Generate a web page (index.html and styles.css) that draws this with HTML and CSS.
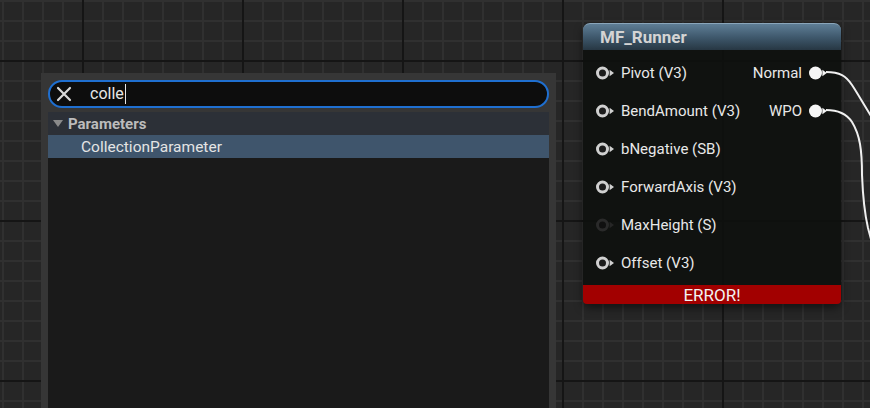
FILE: index.html
```html
<!DOCTYPE html>
<html>
<head>
<meta charset="utf-8">
<link rel="stylesheet" href="styles.css">
</head>
<body>
<div class="canvas">
  <div class="menu">
    <div class="search">
      <svg class="clear" width="16" height="16" viewBox="0 0 16 16"><path d="M2 2 L14 14 M14 2 L2 14" stroke="#d8d8d8" stroke-width="2.2" stroke-linecap="round"/></svg>
      <span class="query">colle</span><span class="caret"></span>
    </div>
    <div class="list">
      <div class="category"><span class="tri"></span>Parameters</div>
      <div class="item">CollectionParameter</div>
    </div>
  </div>

  <div class="node">
    <div class="node-head">MF_Runner</div>
    <div class="node-body">
      <div class="row">
        <span class="pin"><svg width="19" height="14" viewBox="0 0 19 14"><circle cx="6.5" cy="7" r="5" fill="#1c1c1c" stroke="#d0d0d0" stroke-width="3"/><path d="M13.6 3.8 L18 7 L13.6 10.2 Z" fill="#d0d0d0"/></svg></span>
        <span class="label">Pivot (V3)</span>
        <span class="out">Normal<span class="pin"><svg width="19" height="14" viewBox="0 0 19 14"><circle cx="6.5" cy="7" r="6.5" fill="#f6f6f6"/><path d="M13.4 3.8 L17.8 7 L13.4 10.2 Z" fill="#f6f6f6"/></svg></span></span>
      </div>
      <div class="row">
        <span class="pin"><svg width="19" height="14" viewBox="0 0 19 14"><circle cx="6.5" cy="7" r="5" fill="#1c1c1c" stroke="#d0d0d0" stroke-width="3"/><path d="M13.6 3.8 L18 7 L13.6 10.2 Z" fill="#d0d0d0"/></svg></span>
        <span class="label">BendAmount (V3)</span>
        <span class="out">WPO<span class="pin"><svg width="19" height="14" viewBox="0 0 19 14"><circle cx="6.5" cy="7" r="6.5" fill="#f6f6f6"/><path d="M13.4 3.8 L17.8 7 L13.4 10.2 Z" fill="#f6f6f6"/></svg></span></span>
      </div>
      <div class="row">
        <span class="pin"><svg width="19" height="14" viewBox="0 0 19 14"><circle cx="6.5" cy="7" r="5" fill="#1c1c1c" stroke="#d0d0d0" stroke-width="3"/><path d="M13.6 3.8 L18 7 L13.6 10.2 Z" fill="#d0d0d0"/></svg></span>
        <span class="label">bNegative (SB)</span>
      </div>
      <div class="row">
        <span class="pin"><svg width="19" height="14" viewBox="0 0 19 14"><circle cx="6.5" cy="7" r="5" fill="#1c1c1c" stroke="#d0d0d0" stroke-width="3"/><path d="M13.6 3.8 L18 7 L13.6 10.2 Z" fill="#d0d0d0"/></svg></span>
        <span class="label">ForwardAxis (V3)</span>
      </div>
      <div class="row">
        <span class="pin"><svg width="19" height="14" viewBox="0 0 19 14"><circle cx="6.5" cy="7" r="5" fill="#101010" stroke="#2a2a2a" stroke-width="3"/><path d="M13.6 3.8 L18 7 L13.6 10.2 Z" fill="#262626"/></svg></span>
        <span class="label">MaxHeight (S)</span>
      </div>
      <div class="row">
        <span class="pin"><svg width="19" height="14" viewBox="0 0 19 14"><circle cx="6.5" cy="7" r="5" fill="#1c1c1c" stroke="#d0d0d0" stroke-width="3"/><path d="M13.6 3.8 L18 7 L13.6 10.2 Z" fill="#d0d0d0"/></svg></span>
        <span class="label">Offset (V3)</span>
      </div>
    </div>
    <div class="error">ERROR!</div>
  </div>

  <svg class="wires" width="870" height="408" viewBox="0 0 870 408">
    <path d="M826 72 C 840 72, 846 76, 852 85 S 864 105, 876 124" fill="none" stroke="#f0f0f0" stroke-width="2"/>
    <path d="M826 110 C 838 110, 846 113, 852 122 C 860 135, 862 150, 862 175 C 863 200, 865 215, 868 228 L 874 250" fill="none" stroke="#f0f0f0" stroke-width="2"/>
  </svg>
</div>
</body>
</html>
```

FILE: styles.css
```css
html, body {
  margin: 0;
  padding: 0;
}
body {
  width: 870px;
  height: 408px;
  overflow: hidden;
  font-family: Roboto, "Noto Sans", sans-serif;
  background-color: #262626;
  background-image:
    linear-gradient(to right, #151515 2px, transparent 2px),
    linear-gradient(to bottom, #151515 2px, transparent 2px),
    linear-gradient(to right, #303030 2px, transparent 2px),
    linear-gradient(to bottom, #303030 2px, transparent 2px);
  background-size: 160px 160px, 160px 160px, 20px 20px, 20px 20px;
  background-position: 82px 0, 0 60px, 2px 0, 0 0;
}
.canvas {
  position: relative;
  width: 870px;
  height: 408px;
}
.menu {
  position: absolute;
  left: 41px;
  top: 73px;
  width: 515px;
  height: 345px;
  box-sizing: border-box;
  padding: 7px 7px 0;
  background: #363636;
  display: flex;
  flex-direction: column;
}
.search {
  height: 28px;
  box-sizing: border-box;
  border: 2px solid #1f6fd0;
  border-radius: 14px;
  background: #0d0d0d;
  display: flex;
  align-items: center;
  padding-left: 6px;
}
.clear {
  width: 16px;
  height: 16px;
  flex: none;
}
.query {
  margin-left: 18px;
  font-size: 16px;
  color: #e6e6e6;
  line-height: 20px;
}
.caret {
  width: 1px;
  height: 20px;
  background: #e6e6e6;
  margin-left: 1px;
}
.list {
  flex: 1;
  margin-top: 4px;
  background: #1a1a1a;
}
.category {
  height: 23px;
  background: #2c3037;
  display: flex;
  align-items: center;
  padding-left: 5px;
  font-size: 15px;
  font-weight: bold;
  color: #bcbcbc;
}
.tri {
  width: 0;
  height: 0;
  border-left: 5px solid transparent;
  border-right: 5px solid transparent;
  border-top: 7px solid #8a8a8a;
  margin-right: 5px;
}
.item {
  height: 23px;
  background: #3f556c;
  display: flex;
  align-items: center;
  padding-left: 33px;
  font-size: 15.5px;
  color: #e4e4e4;
}
.node {
  position: absolute;
  left: 583px;
  top: 23px;
  width: 258px;
  height: 281px;
  border-radius: 7px;
  background: rgba(14, 16, 14, 0.92);
  box-shadow: 0 4px 8px rgba(0, 0, 0, 0.5);
  display: flex;
  flex-direction: column;
}
.node-head {
  height: 27px;
  box-sizing: border-box;
  border-radius: 7px 7px 0 0;
  border-top: 1px solid #8aa6bb;
  background: linear-gradient(to bottom, #5f7e96 0%, #3f596d 50%, #273743 100%);
  padding-left: 17px;
  display: flex;
  align-items: center;
  font-size: 17px;
  font-weight: bold;
  color: #d4d4d4;
}
.node-body {
  flex: 1;
  padding-top: 4px;
}
.row {
  height: 38px;
  display: flex;
  align-items: center;
  padding-left: 13px;
  padding-right: 13px;
  font-size: 15px;
  color: #e8e8e8;
}
.pin {
  width: 19px;
  height: 14px;
  display: flex;
}
.label {
  margin-left: 6px;
}
.out {
  margin-left: auto;
  display: flex;
  align-items: center;
}
.out .pin {
  margin-left: 7px;
}
.error {
  height: 19px;
  margin-top: -1px;
  background: #a20000;
  border-radius: 0 0 4px 4px;
  color: #f2f2f2;
  font-size: 17px;
  display: flex;
  align-items: center;
  justify-content: center;
}
.wires {
  position: absolute;
  left: 0;
  top: 0;
  pointer-events: none;
}
```
